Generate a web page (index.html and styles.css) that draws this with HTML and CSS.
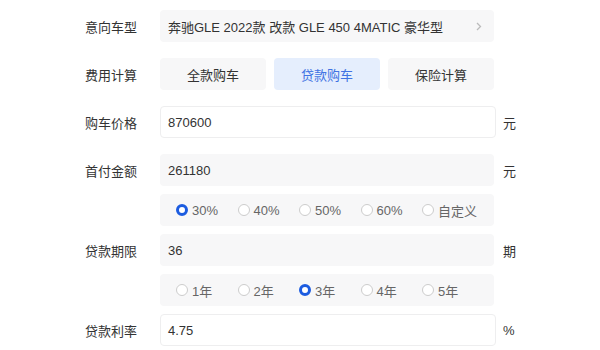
FILE: index.html
```html
<!DOCTYPE html>
<html lang="zh">
<head>
<meta charset="utf-8">
<link rel="stylesheet" href="styles.css">
</head>
<body>
<div class="form">
  <div class="row">
    <div class="label">意向车型</div>
    <div class="field select">
      <span>奔驰GLE 2022款 改款 GLE 450 4MATIC 豪华型</span>
      <svg class="chev" width="6" height="9" viewBox="0 0 6 9"><path d="M1 1l3.5 3.5L1 8" fill="none" stroke="#bbb" stroke-width="1.3"/></svg>
    </div>
    <div class="unit"></div>
  </div>
  <div class="row">
    <div class="label">费用计算</div>
    <div class="tabs">
      <div class="tab">全款购车</div>
      <div class="tab active">贷款购车</div>
      <div class="tab">保险计算</div>
    </div>
    <div class="unit"></div>
  </div>
  <div class="row">
    <div class="label">购车价格</div>
    <div class="field input">870600</div>
    <div class="unit">元</div>
  </div>
  <div class="group">
    <div class="row">
      <div class="label">首付金额</div>
      <div class="field grey">261180</div>
      <div class="unit">元</div>
    </div>
    <div class="row">
      <div class="label"></div>
      <div class="field grey radios">
        <div class="radio on"><i></i>30%</div>
        <div class="radio"><i></i>40%</div>
        <div class="radio"><i></i>50%</div>
        <div class="radio"><i></i>60%</div>
        <div class="radio"><i></i>自定义</div>
      </div>
      <div class="unit"></div>
    </div>
    <div class="row">
      <div class="label">贷款期限</div>
      <div class="field grey">36</div>
      <div class="unit">期</div>
    </div>
    <div class="row">
      <div class="label"></div>
      <div class="field grey radios">
        <div class="radio"><i></i>1年</div>
        <div class="radio"><i></i>2年</div>
        <div class="radio on"><i></i>3年</div>
        <div class="radio"><i></i>4年</div>
        <div class="radio"><i></i>5年</div>
      </div>
      <div class="unit"></div>
    </div>
    <div class="row">
      <div class="label">贷款利率</div>
      <div class="field input">4.75</div>
      <div class="unit">%</div>
    </div>
  </div>
</div>
</body>
</html>
```

FILE: styles.css
```css
html, body {
  margin: 0;
  padding: 0;
  background: #fff;
}
body {
  font-family: "Liberation Sans", "Noto Sans CJK SC", sans-serif;
  font-size: 13px;
  color: #333;
}
.form {
  padding: 10px 0 0 85px;
  display: flex;
  flex-direction: column;
  gap: 16px;
}
.group {
  display: flex;
  flex-direction: column;
  gap: 8px;
}
.row {
  display: flex;
  align-items: center;
  height: 32px;
}
.label {
  width: 75px;
  flex: none;
  color: #333;
}
.field {
  width: 336px;
  height: 32px;
  box-sizing: border-box;
  border-radius: 4px;
  display: flex;
  align-items: center;
  padding-left: 8px;
  flex: none;
}
.select {
  width: 334px;
  margin-right: 2px;
  background: #f7f7f8;
  justify-content: space-between;
  padding-right: 12px;
}
.input {
  background: #fff;
  border: 1px solid #eeeeef;
  padding-left: 7px;
}
.grey {
  width: 334px;
  margin-right: 2px;
  background: #f7f7f8;
}
.unit {
  margin-left: 7px;
  color: #333;
}
.tabs {
  display: flex;
  gap: 8px;
}
.tab {
  width: 106px;
  height: 32px;
  border-radius: 4px;
  background: #f7f7f8;
  display: flex;
  align-items: center;
  justify-content: center;
  color: #333;
}
.tab.active {
  background: #e5eefd;
  color: #4173e3;
}
.radios {
  padding-left: 16px;
}
.radio {
  width: 61.5px;
  flex: none;
  display: flex;
  align-items: center;
  color: #666;
}
.radio i {
  width: 10px;
  height: 10px;
  border: 1px solid #ccc;
  border-radius: 50%;
  background: #fff;
  margin-right: 4px;
  flex: none;
}
.radio.on i {
  width: 6px;
  height: 6px;
  border: 3px solid #1c5ce0;
  background: #fff;
}
```
